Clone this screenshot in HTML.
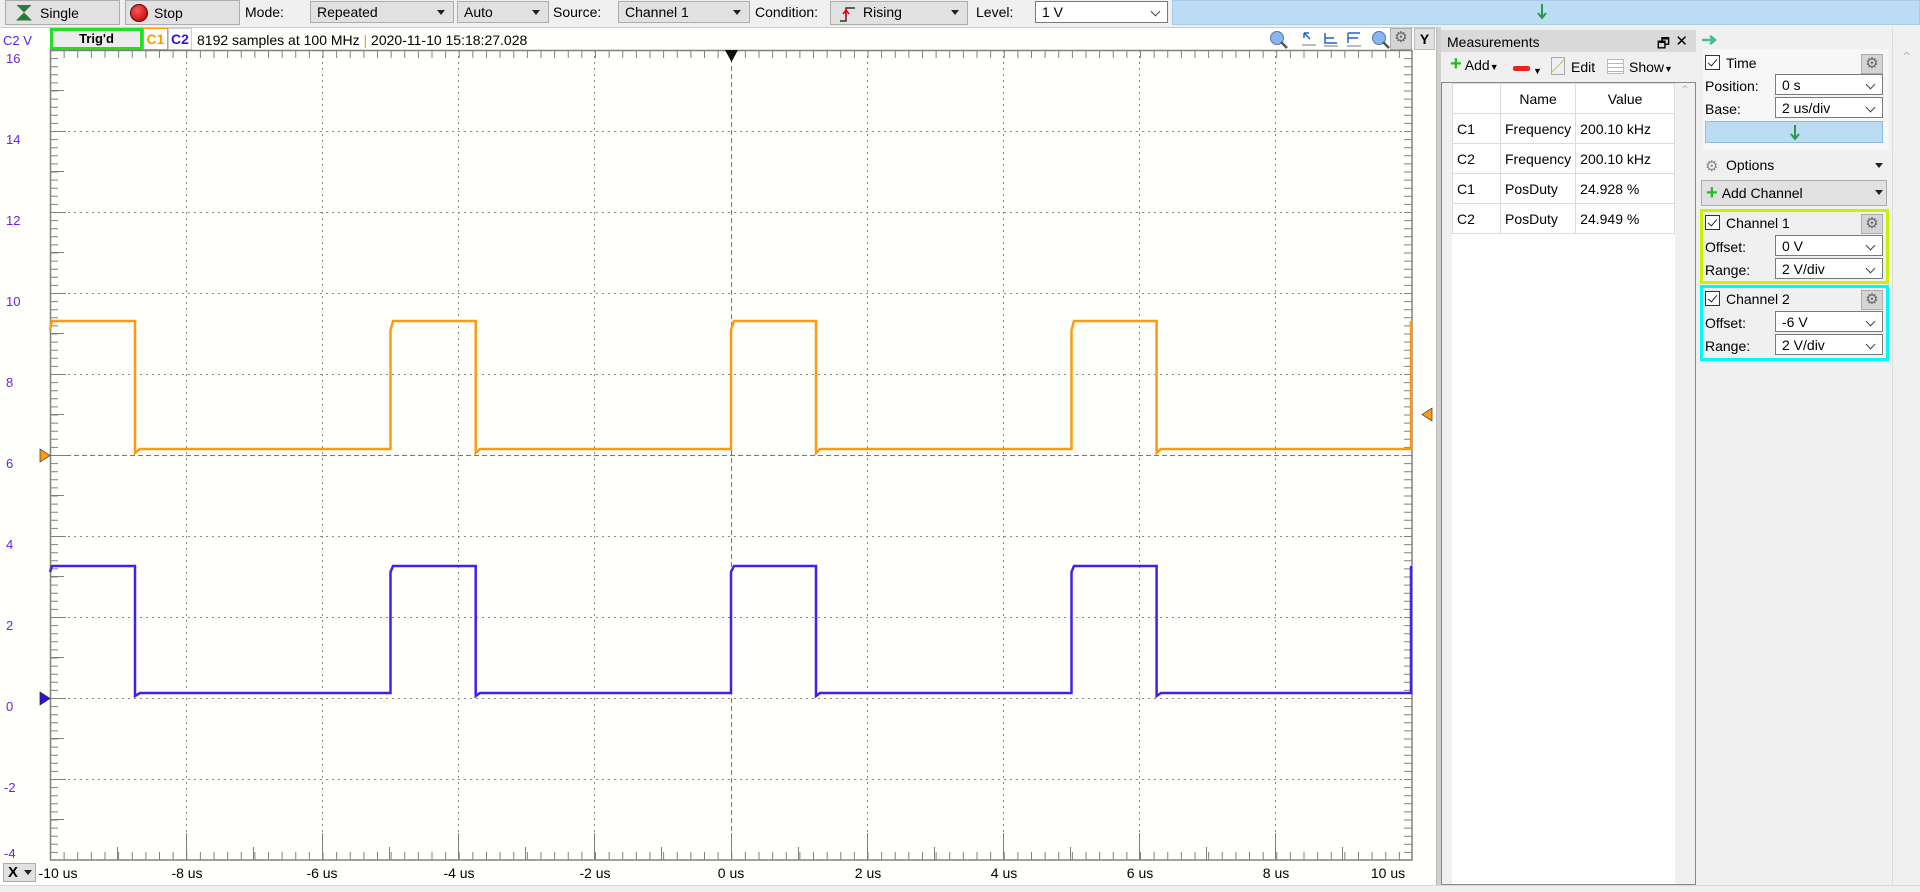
<!DOCTYPE html>
<html><head><meta charset="utf-8">
<style>
*{box-sizing:border-box;margin:0;padding:0}
body{width:1920px;height:892px;overflow:hidden;background:#f0f0f0;font-family:"Liberation Sans",sans-serif;font-size:13px;color:#000;position:relative}
.a{position:absolute}
.btn{position:absolute;background:#e1e1e1;border:1px solid #adadad;display:flex;align-items:center;font-size:14px}
.cb{position:absolute;background:#e1e1e1;border:1px solid #adadad;font-size:14px;padding:2px 6px;line-height:16px}
.cb:after{content:"";position:absolute;right:8px;top:8px;border:4px solid transparent;border-top:5px solid #222}
.cw{position:absolute;background:#fff;border:1px solid #7a7a7a;font-size:14px;padding:2px 6px;line-height:16px}
.cw:after{content:"";position:absolute;right:8px;top:6px;width:6px;height:6px;border-right:1px solid #444;border-bottom:1px solid #444;transform:rotate(45deg)}
.lbl{position:absolute;font-size:14px}
.chk{position:absolute;width:15px;height:15px;border:1px solid #333;background:#fff}
.chk:after{content:"";position:absolute;left:4px;top:1px;width:4px;height:8px;border-right:1.5px solid #222;border-bottom:1.5px solid #222;transform:rotate(40deg)}
.gear{position:absolute;width:22px;height:20px;background:#d4d4d4;border:1px solid #adadad;color:#666;font-size:15px;text-align:center;line-height:18px}
td{border:1px solid #dcdcdc;height:30px;font-size:14px;padding:0 4px}
</style></head><body>

<!-- top toolbar -->
<div class="btn" style="left:5px;top:0;width:115px;height:25px;padding-left:10px"><span style="display:inline-block;width:16px;height:16px;background:#2a7a3a;margin-right:8px;clip-path:polygon(0 0,50% 50%,0 100%,100% 100%,50% 50%,100% 0)"></span>Single</div>
<div class="btn" style="left:125px;top:0;width:115px;height:25px;padding-left:4px"><span style="display:inline-block;width:18px;height:18px;border-radius:50%;background:radial-gradient(circle at 40% 35%,#f55,#a00);border:1px solid #600;margin-right:6px"></span>Stop</div>
<div class="lbl" style="left:245px;top:4px">Mode:</div>
<div class="cb" style="left:310px;top:1px;width:144px;height:22px">Repeated</div>
<div class="cb" style="left:457px;top:1px;width:92px;height:22px">Auto</div>
<div class="lbl" style="left:553px;top:4px">Source:</div>
<div class="cb" style="left:618px;top:1px;width:132px;height:22px">Channel 1</div>
<div class="lbl" style="left:755px;top:4px">Condition:</div>
<div class="cb" style="left:830px;top:1px;width:138px;height:24px;padding-left:32px"><svg class="a" style="left:8px;top:3px" width="18" height="18"><path d="M1,16H7V3H16" fill="none" stroke="#333" stroke-width="1.5"/><path d="M7,12V6M4,9L7,5L10,9" fill="none" stroke="#e00" stroke-width="1.5"/></svg>Rising</div>
<div class="lbl" style="left:976px;top:4px">Level:</div>
<div class="cw" style="left:1035px;top:1px;width:133px;height:22px">1 V</div>
<div class="a" style="left:1172px;top:0;width:748px;height:25px;background:#bcdcf4;border:1px solid #a8cbe8"></div>
<svg class="a" style="left:1537px;top:4px" width="10" height="16"><path d="M5,0V13M1,9L5,14L9,9" fill="none" stroke="#2a9a4a" stroke-width="2"/></svg>

<!-- plot panel -->
<div class="a" style="left:0;top:27px;width:1436px;height:858px;background:#fffffc;border-top:1px solid #ccc"></div>
<div class="a" style="left:3px;top:33px;color:#5522ee;font-size:13px">C2 V</div>
<div class="a" style="left:50px;top:28px;width:93px;height:22px;border:3px solid #22e022;background:#ececec;text-align:center;font-weight:bold;line-height:16px">Trig'd</div>
<div class="a" style="left:143px;top:28px;width:25px;height:22px;border:1px solid #f90;color:#f90;font-weight:bold;text-align:center;line-height:20px;font-size:14px">C1</div>
<div class="a" style="left:168px;top:28px;width:24px;height:22px;border:1px solid #ccc;color:#3311ee;font-weight:bold;text-align:center;line-height:20px;font-size:14px">C2</div>
<div class="a" style="left:197px;top:32px;font-size:14px">8192 samples at 100 MHz <span style="color:#f90">|</span> 2020-11-10 15:18:27.028</div>
<!-- plot icons -->
<svg class="a" style="left:1268px;top:29px" width="145" height="22">
<circle cx="9" cy="9" r="6.5" fill="#8ab8ec" stroke="#5577aa"/><path d="M13,13L19,19" stroke="#555" stroke-width="2.5"/>
<path d="M36,4L42,10M36,4V9M36,4H41" stroke="#2266cc" stroke-width="1.5" fill="none"/><path d="M34,16H48" stroke="#bbb" stroke-width="2"/>
<path d="M57,4V14H69M57,9H66" stroke="#2266cc" stroke-width="1.5" fill="none"/><path d="M56,17H70" stroke="#bbb" stroke-width="2"/>
<path d="M80,4H92M80,4V14M80,9H90" stroke="#2266cc" stroke-width="1.5" fill="none"/><path d="M79,17H93" stroke="#bbb" stroke-width="2"/>
<circle cx="111" cy="9" r="6.5" fill="#8ab8ec" stroke="#5577aa"/><path d="M115,13L121,19" stroke="#555" stroke-width="2.5"/>
</svg>
<div class="gear" style="left:1390px;top:28px;width:22px;height:22px">⚙</div>
<div class="a" style="left:1414px;top:28px;width:21px;height:22px;background:#e1e1e1;border:1px solid #bbb;font-weight:bold;text-align:center;line-height:20px;font-size:14px">Y</div>

<svg class="a" style="left:0;top:0" width="1436" height="885">
<g stroke="#888" stroke-dasharray="2 4" stroke-width="1">
<path d="M50,131.5H1412M50,212.5H1412M50,293.5H1412M50,374.5H1412M50,536.5H1412M50,617.5H1412M50,698.5H1412M50,779.5H1412"/>
<path d="M186.5,50V860M322.5,50V860M458.5,50V860M594.5,50V860M867.5,50V860M1003.5,50V860M1139.5,50V860M1275.5,50V860"/>
</g>
<g stroke="#777" stroke-dasharray="5 3"><path d="M50,455.5H1412"/><path d="M731.5,50V860"/></g>
<g stroke="#808080" fill="none">
<rect x="50.5" y="50.5" width="1361.5" height="809.5" stroke-width="1.5"/>
<path d="M50,856H1412M50,54H1412" stroke-width="8" stroke-dasharray="1 12.625"/>
<path d="M54,50V860M1408,50V860" stroke-width="8" stroke-dasharray="1 7.1"/>
<path d="M117.5,847V860M253.5,847V860M389.5,847V860M525.5,847V860M661.5,847V860M798.5,847V860M934.5,847V860M1070.5,847V860M1206.5,847V860M1342.5,847V860" />
<path d="M186.5,833V860M322.5,833V860M458.5,833V860M594.5,833V860M731.5,833V860M867.5,833V860M1003.5,833V860M1139.5,833V860M1275.5,833V860"/>
<path d="M50,90.5H64M50,171.5H64M50,252.5H64M50,333.5H64M50,414.5H64M50,495.5H64M50,576.5H64M50,657.5H64M50,738.5H64M50,819.5H64"/>
<path d="M50,131.5H66M50,212.5H66M50,293.5H66M50,374.5H66M50,455.5H66M50,536.5H66M50,617.5H66M50,698.5H66M50,779.5H66"/>
</g>
<path d="M50,330L52,321H135V453L140,449H390.5V330L393,321H475.7V453L480,449H731V330L734,321H816V453L820,449H1071.5V330L1074,321H1156.6V453L1161,449H1411V321" fill="none" stroke="#ff9a10" stroke-width="2.5"/>
<path d="M50,572L52,566H135V696L140,693H390.5V572L393,566H475.7V696L480,693H731V572L734,566H816V696L820,693H1071.5V572L1074,566H1156.6V696L1161,693H1411V566" fill="none" stroke="#4020ee" stroke-width="2.5"/>
<path d="M40,449L50,455.5L40,462Z" fill="#ff9a10" stroke="#333" stroke-width="0.7"/>
<path d="M40,692L50,698.5L40,705Z" fill="#3311dd" stroke="#222" stroke-width="0.7"/>
<path d="M1432,408L1422,414.5L1432,421Z" fill="#ff9a10" stroke="#333" stroke-width="0.7"/>
<path d="M725,50H738L731.5,62Z" fill="#111"/>
<g fill="#6a22ee" font-family="Liberation Sans" font-size="13">
<text x="6" y="63">16</text><text x="6" y="144">14</text><text x="6" y="225">12</text><text x="6" y="306">10</text><text x="6" y="387">8</text><text x="6" y="468">6</text><text x="6" y="549">4</text><text x="6" y="630">2</text><text x="6" y="711">0</text><text x="4" y="792">-2</text><text x="4" y="858">-4</text>
</g>
<g fill="#000" font-family="Liberation Sans" font-size="14" text-anchor="middle">
<text x="58" y="878">-10 us</text><text x="187" y="878">-8 us</text><text x="322" y="878">-6 us</text><text x="459" y="878">-4 us</text><text x="595" y="878">-2 us</text><text x="731" y="878">0 us</text><text x="868" y="878">2 us</text><text x="1004" y="878">4 us</text><text x="1140" y="878">6 us</text><text x="1276" y="878">8 us</text><text x="1388" y="878">10 us</text>
</g>
</svg>
<div class="a" style="left:3px;top:863px;width:33px;height:19px;background:#e1e1e1;border:1px solid #adadad;font-weight:bold;font-size:15px;padding-left:4px;line-height:17px">X</div>
<div class="a" style="left:24px;top:870px;border:4px solid transparent;border-top:5px solid #222"></div>

<!-- measurements -->
<div class="a" style="left:1436px;top:27px;width:5px;height:858px;background:#d0d0d0;border-left:1px solid #bbb"></div>
<div class="a" style="left:1441px;top:30px;width:255px;height:22px;background:#d9d9d9;font-size:14px;padding:4px 6px">Measurements<span class="a" style="right:26px;top:3px">🗗</span><span class="a" style="right:8px;top:2px;font-size:15px">✕</span></div>
<div class="a" style="left:1450px;top:57px;font-size:14px"><span style="color:#2b2;font-weight:bold;font-size:20px;line-height:14px">+</span> Add<span style="font-size:9px">▼</span></div>
<div class="a" style="left:1513px;top:66px;width:17px;height:5px;background:#e22;border-radius:2px"></div><div class="a" style="left:1533px;top:66px;font-size:9px">▼</div>
<div class="a" style="left:1551px;top:57px;width:14px;height:18px;border:1px solid #aaa;background:linear-gradient(135deg,#eef 45%,#cc0 50%,#eef 55%)"></div>
<div class="a" style="left:1571px;top:59px;font-size:14px">Edit</div>
<div class="a" style="left:1607px;top:59px;width:17px;height:15px;border:1px solid #bbb;background:repeating-linear-gradient(#fff 0 3px,#9bd 3px 4px)"></div>
<div class="a" style="left:1629px;top:59px;font-size:14px">Show<span style="font-size:9px">▼</span></div>
<div class="a" style="left:1441px;top:82px;width:255px;height:803px;background:#fff;border:1px solid #888"></div>
<div class="a" style="left:1442px;top:83px;width:10px;height:801px;background:#f0f0f0"></div>
<div class="a" style="left:1675px;top:83px;width:20px;height:801px;background:#f0f0f0;color:#bbb;text-align:center;font-size:12px">⌃</div>
<table class="a" style="left:1452px;top:83px;border-collapse:collapse;width:223px">
<tr><td style="width:48px"></td><td style="width:74px;text-align:center">Name</td><td style="text-align:center">Value</td></tr>
<tr><td>C1</td><td>Frequency</td><td>200.10 kHz</td></tr>
<tr><td>C2</td><td>Frequency</td><td>200.10 kHz</td></tr>
<tr><td>C1</td><td>PosDuty</td><td>24.928 %</td></tr>
<tr><td>C2</td><td>PosDuty</td><td>24.949 %</td></tr>
</table>

<!-- right panel -->
<svg class="a" style="left:1702px;top:35px" width="16" height="10"><path d="M0,5H11M8,1L13,5L8,9" stroke="#4b8" stroke-width="2.5" fill="none"/></svg>
<div class="a" style="left:1892px;top:27px;width:28px;height:858px;background:#f0f0f0;border-left:1px solid #ddd;color:#bbb;text-align:center;font-size:14px;padding-top:22px">⌃</div>
<div class="a" style="left:1703px;top:49px;width:186px;height:100px;background:#f7f7f7"></div>
<div class="chk" style="left:1705px;top:55px"></div><div class="lbl" style="left:1726px;top:55px">Time</div>
<div class="gear" style="left:1861px;top:54px">⚙</div>
<div class="lbl" style="left:1705px;top:78px">Position:</div><div class="cw" style="left:1775px;top:74px;width:108px;height:21px">0 s</div>
<div class="lbl" style="left:1705px;top:101px">Base:</div><div class="cw" style="left:1775px;top:97px;width:108px;height:21px">2 us/div</div>
<div class="a" style="left:1705px;top:121px;width:178px;height:22px;background:#bcdcf4;border:1px solid #8fbbe0"></div>
<svg class="a" style="left:1790px;top:125px" width="10" height="16"><path d="M5,0V13M1,9L5,14L9,9" fill="none" stroke="#2a9a4a" stroke-width="2"/></svg>
<div class="lbl" style="left:1705px;top:157px;color:#888;font-size:15px">⚙</div><div class="lbl" style="left:1726px;top:157px">Options</div>
<div class="a" style="left:1875px;top:163px;border:4px solid transparent;border-top:5px solid #222"></div>
<div class="btn" style="left:1701px;top:180px;width:186px;height:26px;padding-left:4px"><span style="color:#2b2;font-weight:bold;font-size:20px;margin-right:4px">+</span>Add Channel</div>
<div class="a" style="left:1875px;top:190px;border:4px solid transparent;border-top:5px solid #222"></div>

<div class="a" style="left:1700px;top:209px;width:189px;height:75px;border:3px solid #ccf000"></div>
<div class="chk" style="left:1705px;top:215px"></div><div class="lbl" style="left:1726px;top:215px">Channel 1</div>
<div class="gear" style="left:1861px;top:214px">⚙</div>
<div class="lbl" style="left:1705px;top:239px">Offset:</div><div class="cw" style="left:1775px;top:235px;width:108px;height:21px">0 V</div>
<div class="lbl" style="left:1705px;top:262px">Range:</div><div class="cw" style="left:1775px;top:258px;width:108px;height:21px">2 V/div</div>

<div class="a" style="left:1700px;top:285px;width:189px;height:76px;border:3px solid #00f8f8"></div>
<div class="chk" style="left:1705px;top:291px"></div><div class="lbl" style="left:1726px;top:291px">Channel 2</div>
<div class="gear" style="left:1861px;top:290px">⚙</div>
<div class="lbl" style="left:1705px;top:315px">Offset:</div><div class="cw" style="left:1775px;top:311px;width:108px;height:21px">-6 V</div>
<div class="lbl" style="left:1705px;top:338px">Range:</div><div class="cw" style="left:1775px;top:334px;width:108px;height:21px">2 V/div</div>

<div class="a" style="left:0;top:885px;width:1920px;height:7px;background:#f0f0f0;border-top:1px solid #d8d8d8"></div>
</body></html>
